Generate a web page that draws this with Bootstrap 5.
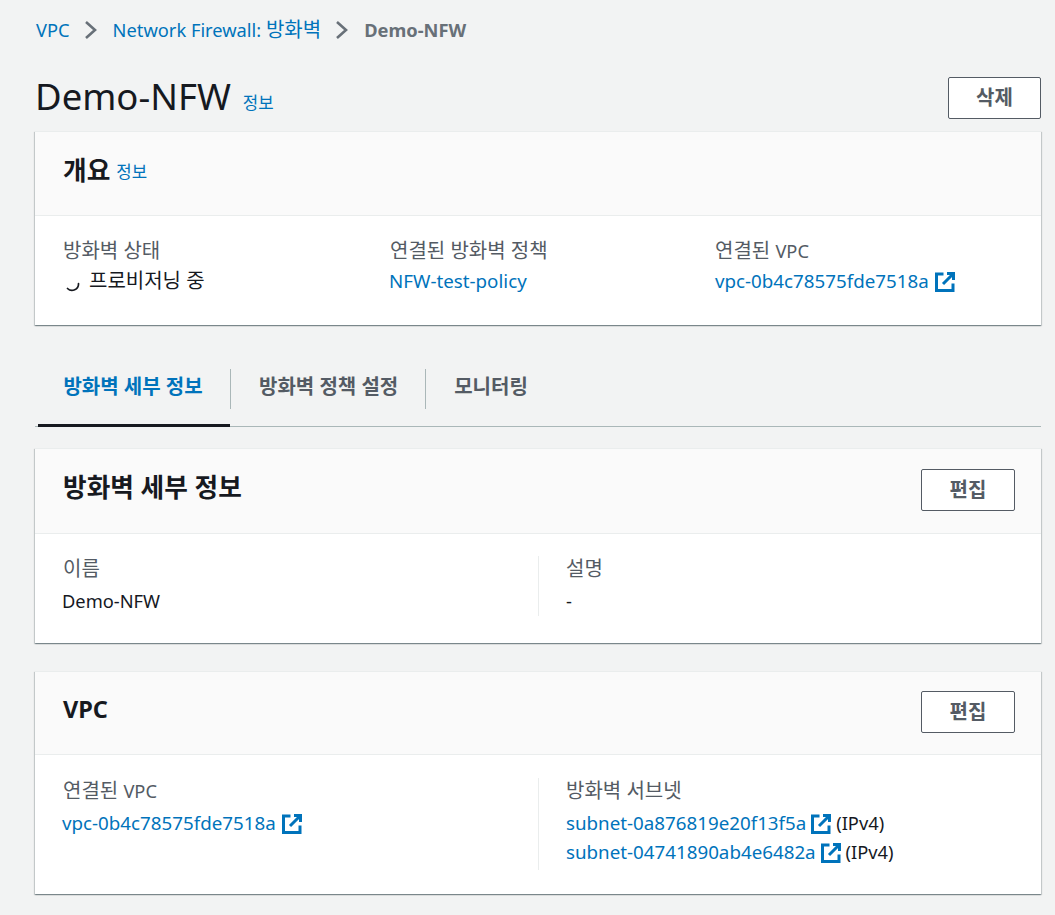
<!doctype html>
<html lang="ko">
<head>
<meta charset="utf-8">
<title>Demo-NFW</title>
<link href="https://cdn.jsdelivr.net/npm/bootstrap@5.3.0/dist/css/bootstrap.min.css" rel="stylesheet">
<style>
html,body{height:100%}
body{background:#f2f3f3;color:#16191f;font-family:"Noto Sans","Noto Sans CJK KR",sans-serif;font-size:20px;line-height:26px;overflow:hidden}
a{color:#0073bb;text-decoration:none}
.lat{font-size:18.3px}
.idl{font-size:18.75px}
.shift-l{margin-left:-1px}
.page-wrap{padding:17px 14px 0 35px}
.crumbs{height:26px;margin-bottom:0;padding-left:1px}
.crumbs .cur{color:#687078;font-weight:700}
.crumb-sep{width:14px;height:20px;color:#687078;margin:0 15px 0 14px}
.title-row{height:88px;padding-top:30px}
.page-title{font-size:36.5px;font-weight:400;line-height:46px;margin:0}
.info-sm{font-size:16.8px;line-height:20px}
.title-info{margin-left:12px;margin-bottom:6px}
.head-info{margin-left:6px;margin-bottom:4px}
.aws-btn{border:1px solid #545b64;border-radius:2px;background:#fff;color:#545b64;font-weight:700;font-size:20px;line-height:24px;padding:8px 0;width:94px;text-align:center}
.top-btn{margin-top:4px;width:93px}
.aws-card{background:#fff;box-shadow:0 1px 1px 0 rgba(0,28,36,.3),1px 1px 1px 0 rgba(0,28,36,.15),-1px 1px 1px 0 rgba(0,28,36,.15);border-top:1px solid #eaeded}
.aws-head{background:#fafafa;border-bottom:1px solid #eaeded;padding:0 26px 0 28px;height:84px}
.aws-head h2{font-size:25.7px;font-weight:700;line-height:30px;margin:0 0 6px}
.aws-head h2.lat-head{font-size:23.5px;margin-bottom:8px}
.head-a{height:85px}
.head-a .aws-btn{margin-top:-3px}
.head-b{height:83px}
.head-b .aws-btn{margin-top:-3px}
.lbl{color:#545b64;line-height:26px}
.val{line-height:29px}
.ov-body{height:109px;padding:22px 26px 0 28px}
.ov-body .val{margin-top:2px}
.ov-col{width:327px}
.ov-col+.ov-col{width:325px}
.tabs-row{height:82px;margin-top:20px;border-bottom:1px solid #aab7b8;align-items:stretch}
.tab-item{position:relative;font-weight:700;color:#545b64;padding:3px 27px 0 29px;display:flex;align-items:center;height:100%}
.tab-item.on{color:#0073bb;margin-left:3px;padding:3px 27px 0 25px;width:192px;justify-content:center}
.tab-item.on::after{content:"";position:absolute;left:0;right:0;bottom:-1px;height:3px;background:#16191f}
.tab-item+.tab-item::before{content:"";position:absolute;left:0;top:24px;height:40px;width:1px;background:#aab7b8}
.det-body{padding:22px 26px 0 28px}
.body-a{height:109px}
.body-b{height:139px;padding-top:23px}
.det-col{width:475px;flex:none}
.short-col{height:60px}
.tall-col{height:92px}
.det-col+.det-col{border-left:1px solid #eaeded;padding-left:27px}
.det-col .lbl+.val{margin-top:4px}
.spin{width:18px;height:18px;color:#16191f;margin:4px 8px 0 0}
.ext{width:20px;height:20px;vertical-align:-4px;margin-left:6px;color:#0073bb}
.val.idl .ext{margin-left:5px}
.mt-card2{margin-top:21px}
.mt-card3{margin-top:28px}
</style>
</head>
<body>
<div class="page-wrap">
  <nav class="crumbs d-flex align-items-center">
    <a href="#" class="lat">VPC</a>
    <svg class="crumb-sep" viewBox="0 0 14 20" fill="none" stroke="currentColor" stroke-width="2.6"><path d="M2 2 11 10 2 18"/></svg>
    <a href="#"><span class="lat">Network Firewall: </span>방화벽</a>
    <svg class="crumb-sep" viewBox="0 0 14 20" fill="none" stroke="currentColor" stroke-width="2.6"><path d="M2 2 11 10 2 18"/></svg>
    <span class="cur lat">Demo-NFW</span>
  </nav>
  <div class="title-row d-flex justify-content-between align-items-start">
    <div class="d-flex align-items-end">
      <h1 class="page-title">Demo-NFW</h1>
      <a href="#" class="info-sm title-info">정보</a>
    </div>
    <button class="aws-btn top-btn" type="button">삭제</button>
  </div>

  <section class="aws-card">
    <div class="aws-head d-flex align-items-center">
      <h2>개요</h2><a href="#" class="info-sm head-info">정보</a>
    </div>
    <div class="ov-body d-flex">
      <div class="ov-col">
        <div class="lbl">방화벽 상태</div>
        <div class="val d-flex align-items-center">
          <svg class="spin" viewBox="0 0 18 18" fill="none" stroke="currentColor" stroke-width="1.7" stroke-linecap="round"><path d="M15.5 9.5A6.5 6.5 0 0 1 4.5 14.5"/></svg>프로비저닝 중
        </div>
      </div>
      <div class="ov-col">
        <div class="lbl">연결된 방화벽 정책</div>
        <div class="val"><a href="#" class="idl shift-l">NFW-test-policy</a></div>
      </div>
      <div>
        <div class="lbl">연결된 <span class="lat">VPC</span></div>
        <div class="val"><a href="#" class="idl">vpc-0b4c78575fde7518a<svg class="ext" viewBox="0 0 20 20" fill="none" stroke="currentColor" stroke-width="3"><path d="M8.5 2H1.5V18.5H18V11.5"/><path d="M12 1.5H18.5V8"/><path d="M18 2 8 12"/></svg></a></div>
      </div>
    </div>
  </section>

  <div class="tabs-row d-flex">
    <div class="tab-item on">방화벽 세부 정보</div>
    <div class="tab-item">방화벽 정책 설정</div>
    <div class="tab-item">모니터링</div>
  </div>

  <section class="aws-card mt-card2">
    <div class="aws-head head-a d-flex align-items-center justify-content-between">
      <h2>방화벽 세부 정보</h2>
      <button class="aws-btn" type="button">편집</button>
    </div>
    <div class="det-body body-a d-flex">
      <div class="det-col short-col">
        <div class="lbl">이름</div>
        <div class="val lat shift-l">Demo-NFW</div>
      </div>
      <div class="det-col short-col">
        <div class="lbl">설명</div>
        <div class="val lat">-</div>
      </div>
    </div>
  </section>

  <section class="aws-card mt-card3">
    <div class="aws-head head-b d-flex align-items-center justify-content-between">
      <h2 class="lat-head">VPC</h2>
      <button class="aws-btn" type="button">편집</button>
    </div>
    <div class="det-body body-b d-flex">
      <div class="det-col tall-col">
        <div class="lbl">연결된 <span class="lat">VPC</span></div>
        <div class="val"><a href="#" class="idl shift-l">vpc-0b4c78575fde7518a<svg class="ext" viewBox="0 0 20 20" fill="none" stroke="currentColor" stroke-width="3"><path d="M8.5 2H1.5V18.5H18V11.5"/><path d="M12 1.5H18.5V8"/><path d="M18 2 8 12"/></svg></a></div>
      </div>
      <div class="det-col tall-col">
        <div class="lbl">방화벽 서브넷</div>
        <div class="val idl"><a href="#">subnet-0a876819e20f13f5a<svg class="ext" viewBox="0 0 20 20" fill="none" stroke="currentColor" stroke-width="3"><path d="M8.5 2H1.5V18.5H18V11.5"/><path d="M12 1.5H18.5V8"/><path d="M18 2 8 12"/></svg></a> <span class="lat">(IPv4)</span></div>
        <div class="val idl"><a href="#">subnet-04741890ab4e6482a<svg class="ext" viewBox="0 0 20 20" fill="none" stroke="currentColor" stroke-width="3"><path d="M8.5 2H1.5V18.5H18V11.5"/><path d="M12 1.5H18.5V8"/><path d="M18 2 8 12"/></svg></a> <span class="lat">(IPv4)</span></div>
      </div>
    </div>
  </section>
</div>
</body>
</html>
